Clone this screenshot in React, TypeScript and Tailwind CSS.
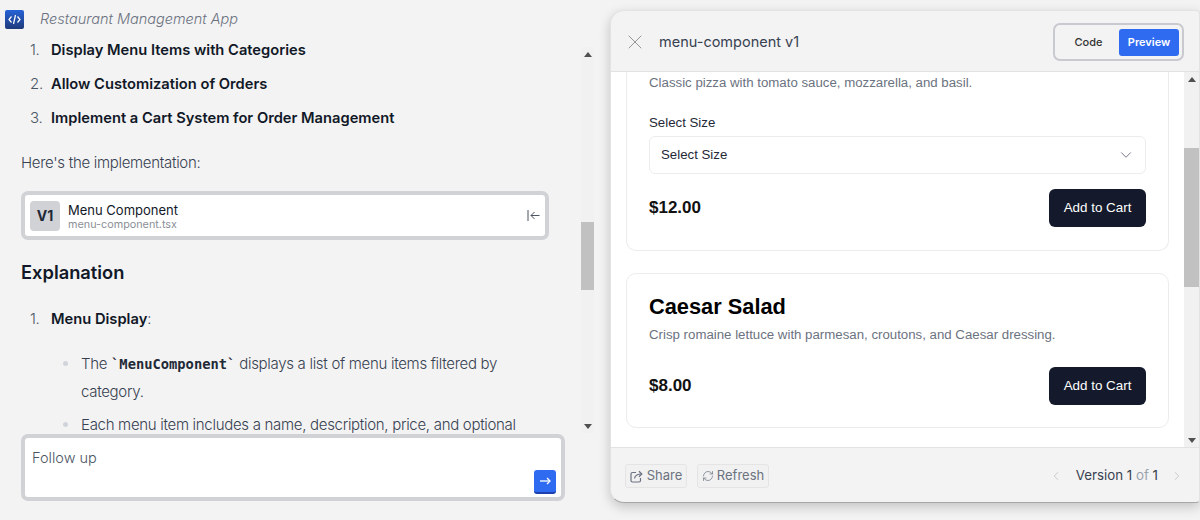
import { ChevronDown, ChevronLeft, ChevronRight, RefreshCw, X } from 'lucide-react'

function Scrollbar({ thumbTop, thumbHeight, className = '' }: { thumbTop: string; thumbHeight: string; className?: string }) {
  return (
    <div className={`flex shrink-0 flex-col bg-[#f1f1f1] ${className}`}>
      <div className="flex h-[14px] items-center justify-center">
        <div className="h-0 w-0 border-x-[4px] border-b-[5px] border-x-transparent border-b-[#505050]" />
      </div>
      <div className="flex-1">
        <div className={`${thumbTop} ${thumbHeight} bg-[#c1c1c1]`} />
      </div>
      <div className="flex h-[14px] items-center justify-center">
        <div className="h-0 w-0 border-x-[4px] border-t-[5px] border-x-transparent border-t-[#505050]" />
      </div>
    </div>
  )
}

function Logo() {
  return (
    <div className="flex h-[19px] w-[19px] items-center justify-center rounded-[2px] bg-gradient-to-b from-[#2563d8] to-[#1e3a7a]">
      <svg width="13" height="11" viewBox="0 0 13 11" fill="none" stroke="white" strokeWidth="1.2">
        <path d="M3.5 2.5 1 5.5l2.5 3" />
        <path d="M9.5 2.5 12 5.5l-2.5 3" />
        <path d="M7.5 1 5.5 10" />
      </svg>
    </div>
  )
}

function Step({ n, children }: { n: string; children: React.ReactNode }) {
  return (
    <li className="flex h-[22px] leading-[22px]">
      <span className="w-[30px] pl-[9px] text-[#4b5563]">{n}</span>
      {children}
    </li>
  )
}

function Chat() {
  return (
    <div className="flex w-[610px] shrink-0 flex-col font-['Inter',sans-serif]">
      <div className="flex h-[38px] shrink-0 items-center pl-[5px]">
        <Logo />
        <span className="ml-[16px] text-[14.5px] font-light italic text-[#6b7280]">Restaurant Management App</span>
      </div>

      <div className="flex h-[398px] pr-[16px]">
        <div className="flex-1 overflow-hidden pl-[21px] pr-[40px] pt-[1px] text-[15px] font-light tracking-[-0.3px] text-[#374151]">
          <ol className="flex flex-col gap-[12px]">
            <Step n="1."><strong className="text-[14.7px] font-semibold tracking-normal text-[#111827]">Display Menu Items with Categories</strong></Step>
            <Step n="2."><strong className="text-[14.7px] font-semibold tracking-normal text-[#111827]">Allow Customization of Orders</strong></Step>
            <Step n="3."><strong className="text-[14.7px] font-semibold tracking-normal text-[#111827]">Implement a Cart System for Order Management</strong></Step>
          </ol>
          <p className="mt-[23px] leading-[22px]">Here's the implementation:</p>

          <div className="mt-[17px] flex h-[49px] w-[528px] items-center rounded-[7px] border-[4px] border-[#d1d2d6] bg-white pl-[5px] pr-[5px] tracking-normal">
            <div className="flex h-[30px] w-[30px] items-center justify-center rounded-[4px] bg-[#d1d2d6] text-[14px] font-bold text-[#1f2937]">V1</div>
            <div className="ml-[8px] flex-1 pt-[2px] font-normal">
              <div className="text-[13px] leading-[16px] text-[#111827]">Menu Component</div>
              <div className="text-[10.8px] leading-[13px] text-[#8b8f98]">menu-component.tsx</div>
            </div>
            <svg width="13" height="11" viewBox="0 0 13 11" fill="none" stroke="#4b5563" strokeWidth="1">
              <path d="M1 0v11" />
              <path d="M12.500 5.500H4" />
              <path d="M7.500 2 4 5.500 7.500 9" />
            </svg>
          </div>

          <h2 className="mt-[19px] text-[18.3px] font-semibold leading-[26px] tracking-normal text-[#111827]">Explanation</h2>
          <div className="mt-[23px] flex h-[22px] leading-[22px]">
            <span className="w-[30px] pl-[9px] text-[#4b5563]">1.</span>
            <span className="text-[14.7px] tracking-normal"><strong className="font-semibold text-[#111827]">Menu Display</strong>:</span>
          </div>
          <ul className="mt-[20px] flex flex-col gap-[6px] pl-[60px] leading-[27px]">
            <li className="relative w-[440px]">
              <span className="absolute left-[-18px] top-[11px] h-[5px] w-[5px] rounded-full bg-[#d1d5db]" />
              The <code className="font-['DejaVu_Sans_Mono',monospace] text-[13.75px] font-bold tracking-normal text-[#1f2937]">`MenuComponent`</code> displays a list of menu items filtered by category.
            </li>
            <li className="relative w-[458px]">
              <span className="absolute left-[-18px] top-[11px] h-[5px] w-[5px] rounded-full bg-[#d1d5db]" />
              Each menu item includes a name, description, price, and optional
            </li>
          </ul>
        </div>
        <Scrollbar thumbTop="mt-[161px]" thumbHeight="h-[68px]" className="mt-[9px] h-[386px] w-[13px]" />
      </div>

      <div className="ml-[21px] flex h-[67px] w-[544px] -translate-y-[2px] flex-col rounded-[7px] border-[4px] border-[#d1d2d6] bg-white px-[7px] pb-[3px] pt-[10px]">
        <div className="text-[14.5px] font-light leading-[20px] text-[#4b5563]">Follow up</div>
        <div className="mt-auto flex justify-end">
          <div className="-mr-[2px] flex h-[24px] w-[22px] items-center justify-center rounded-[3px] border-b-[2px] border-[#1e40af] bg-[#2f6bf0] text-white">
            <svg width="11" height="8" viewBox="0 0 11 8" fill="none" stroke="white" strokeWidth="1.300">
              <path d="M0 4h9.500" />
              <path d="M7 1l3 3-3 3" />
            </svg>
          </div>
        </div>
      </div>
    </div>
  )
}

function AddRow({ price, className }: { price: string; className: string }) {
  return (
    <div className={`flex items-center justify-between ${className}`}>
      <span className="text-[17px] font-bold text-[#111]">{price}</span>
      <div className="flex h-[38px] w-[97px] items-center justify-center rounded-[6px] bg-[#141a2b] text-[13.4px] text-white">Add to Cart</div>
    </div>
  )
}

function Preview() {
  return (
    <div className="mt-[10px] flex h-[493px] w-[590px] shrink-0 flex-col overflow-hidden rounded-l-[14px] rounded-r-[4px] border border-[#e3e3e3] border-b-[#a8a8a8] bg-[#f3f3f3] font-['Inter',sans-serif] shadow-[0_4px_12px_rgba(0,0,0,0.2)]">
      <div className="flex h-[61px] shrink-0 items-center border-b border-[#e2e2e2] pl-[12px] pr-[15px] pt-[2px]">
        <X className="h-[24px] w-[24px] text-[#8a8a8a]" strokeWidth={0.9} />
        <span className="ml-[12px] text-[14.500px] text-[#374151]">menu-component v1</span>
        <div className="ml-auto flex h-[38px] w-[131px] items-center rounded-[7px] border-[2px] border-[#c9cad0] p-[3px]">
          <div className="flex-1 text-center text-[11px] font-medium text-[#333]">Code</div>
          <div className="flex h-[27px] w-[60px] items-center justify-center rounded-[3px] bg-[#2f6bf0] text-[11px] font-semibold text-white">Preview</div>
        </div>
      </div>

      <div className="flex h-[376px] shrink-0 border-b border-[#e2e2e2] bg-white">
        <div className="flex-1 overflow-hidden pl-[15px] pr-[15px] font-['Liberation_Sans',sans-serif]">
          <div className="h-[179px] rounded-b-[10px] border-x border-b border-[#ececec] pl-[22px] pr-[22px]">
            <p className="pt-[2px] text-[13.25px] leading-[18px] text-[#6b7280]">Classic pizza with tomato sauce, mozzarella, and basil.</p>
            <p className="mt-[22px] text-[13.25px] leading-[18px] text-[#1f2937]">Select Size</p>
            <div className="mt-[4px] flex h-[38px] items-center justify-between rounded-[6px] border border-[#ececec] pl-[11px] pr-[10px] text-[13.25px] text-[#1f2937]">
              Select Size
              <ChevronDown className="h-[18px] w-[18px] text-[#6b7280]" strokeWidth={1.25} />
            </div>
            <AddRow price="$12.00" className="mt-[15px]" />
          </div>
          <div className="mt-[22px] h-[155px] rounded-[10px] border border-[#ececec] pl-[22px] pr-[22px]">
            <h3 className="pt-[19px] text-[21.8px] font-bold leading-[28px] text-black">Caesar Salad</h3>
            <p className="mt-[5px] text-[13.25px] leading-[18px] text-[#6b7280]">Crisp romaine lettuce with parmesan, croutons, and Caesar dressing.</p>
            <AddRow price="$8.00" className="mt-[23px]" />
          </div>
        </div>
        <Scrollbar thumbTop="mt-[62px]" thumbHeight="h-[139px]" className="w-[15px]" />
      </div>

      <div className="flex flex-1 items-center pl-[14px] pr-[15px] pt-[2px] text-[13px] text-[#6b7280]">
        <div className="flex h-[24px] w-[62px] items-center justify-center gap-[4px] rounded-[3px] border border-[#e4e4e4] bg-[#f1f1f1]">
          <svg width="13" height="13" viewBox="0 0 13 13" fill="none" stroke="currentColor" strokeWidth="1.2">
            <path d="M6 2.500H2.500a1.500 1.500 0 0 0-1.500 1.500v6.500A1.500 1.500 0 0 0 2.500 12h6.500a1.500 1.500 0 0 0 1.500-1.500V8" />
            <path d="M4.500 8.500C5 5.500 7 4 11.500 4" />
            <path d="M9 1.300 11.800 4 9 6.700" />
          </svg>
          Share
        </div>
        <div className="ml-[10px] flex h-[24px] w-[72px] items-center justify-center gap-[3px] rounded-[3px] border border-[#e4e4e4] bg-[#f1f1f1]">
          <RefreshCw className="h-[12px] w-[12px]" strokeWidth={1.4} />
          Refresh
        </div>
        <ChevronLeft className="ml-auto h-[14px] w-[14px] text-[#c4c4c4]" strokeWidth={1.5} />
        <span className="ml-[13px] text-[13.3px] text-[#374151]">Version 1 <span className="text-[#9ca3af]">of</span> 1</span>
        <ChevronRight className="ml-[12px] h-[14px] w-[14px] text-[#c4c4c4]" strokeWidth={1.5} />
      </div>
    </div>
  )
}

export default function App() {
  return (
    <div className="flex h-[520px] w-[1200px] overflow-hidden bg-[#f3f3f3]">
      <Chat />
      <Preview />
    </div>
  )
}
